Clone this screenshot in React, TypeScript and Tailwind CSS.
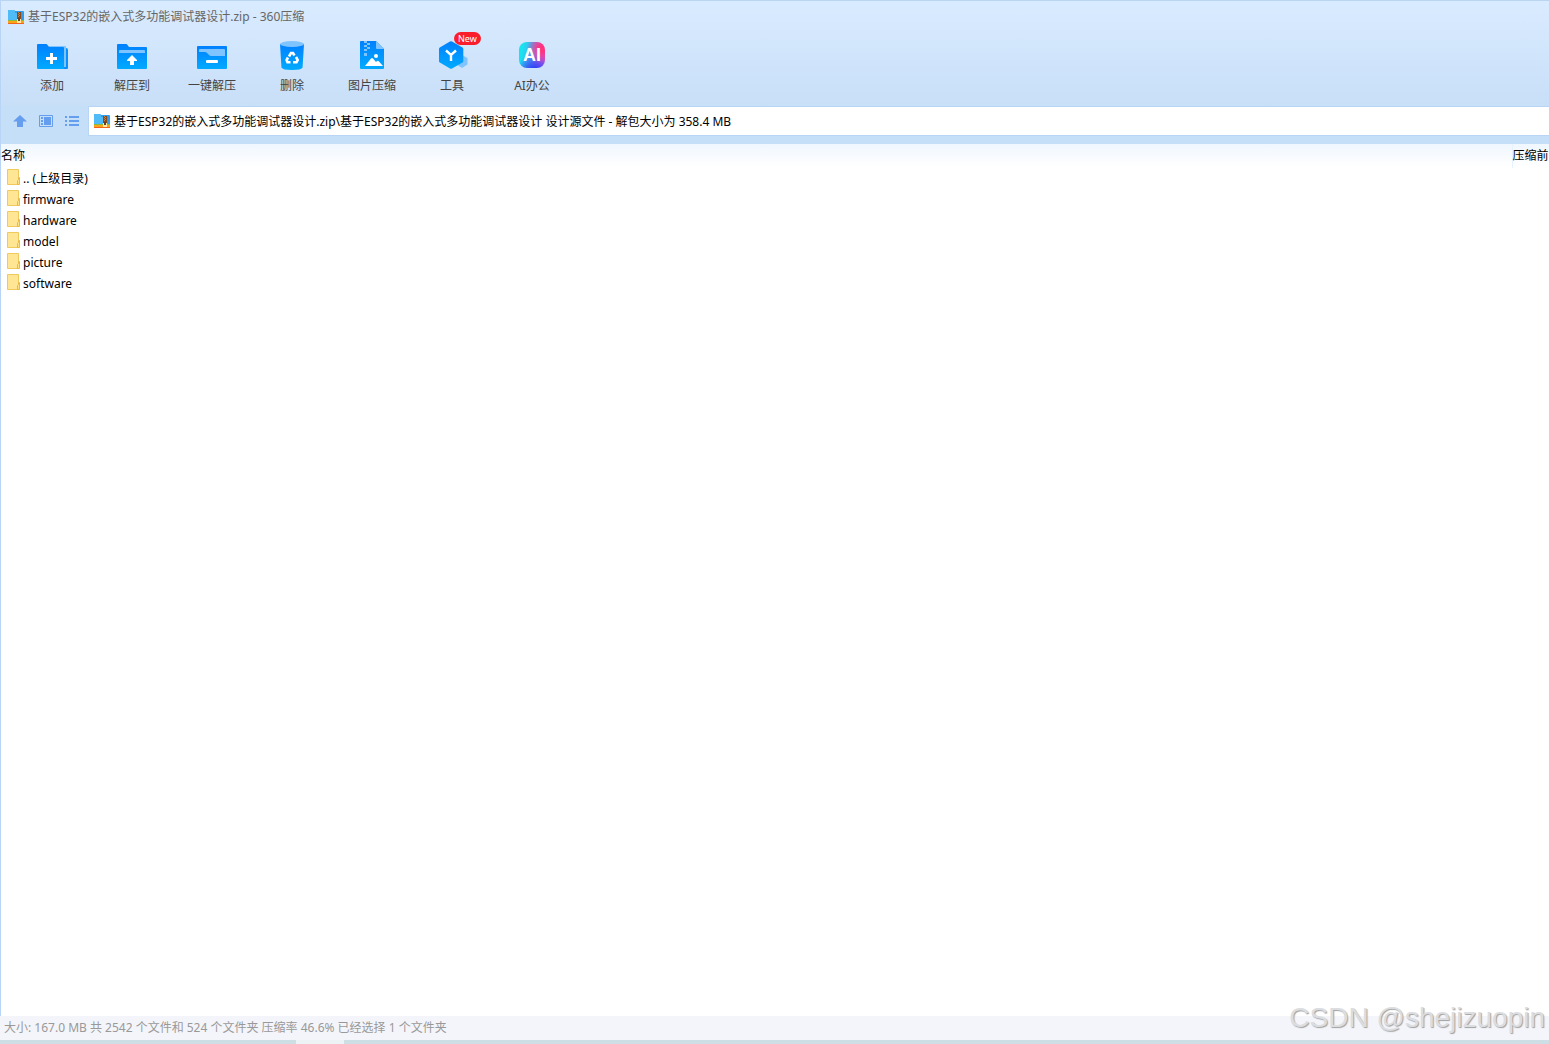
import { useState } from 'react';
import type { ReactNode } from 'react';

const ARCHIVE = '基于ESP32的嵌入式多功能调试器设计';

const folders = ['.. (上级目录)', 'firmware', 'hardware', 'model', 'picture', 'software'];

const BlueGradient = ({ id }: { id: string }) => (
    <defs>
        <linearGradient id={id} x1="0" y1="0" x2="0" y2="1">
            <stop offset="0" stopColor="#0080ff" />
            <stop offset="1" stopColor="#00aaff" />
        </linearGradient>
    </defs>
);

const AddIcon = () => (
    <svg viewBox="0 0 32 32" className="size-8">
        <BlueGradient id="add" />
        <path d="M14 8h16q2 0 2 2v18q0 1-1 1H14z" fill="#0a8fff" />
        <path d="M12 6h17q1 0 1 1v20h-2V8H13z" fill="#80c4ff" />
        <path d="M1 5q0-1 1-1h8q1 0 1.500 1l1.500 2h14q1 0 1 1v21H2q-1 0-1-1z" fill="url(#add)" />
        <path d="M14 13h3v4h4v3h-4v4h-3v-4h-4v-3h4z" fill="#fff" />
    </svg>
);

const ExtractIcon = () => (
    <svg viewBox="0 0 32 32" className="size-8">
        <BlueGradient id="extract" />
        <path d="M1 5q0-1 1-1h8q1 0 1.500 1l1.500 2h17q1 0 1 1v20q0 1-1 1H2q-1 0-1-1z" fill="url(#extract)" />
        <path d="M3 13v-2q0-1 1-1h24q1 0 1 1v2z" fill="#80c4ff" />
        <path d="M16 15l5 5v1h-3v4h-4v-4h-3v-1z" fill="#fff" />
    </svg>
);

const QuickExtractIcon = () => (
    <svg viewBox="0 0 32 32" className="size-8">
        <BlueGradient id="quick" />
        <rect x="1" y="6" width="30" height="23" rx="1" fill="url(#quick)" />
        <path d="M3 12v-2q0-1 1-1h24q1 0 1 1v6H15q-1 0-2-1l-2-2q-1-1-2-1z" fill="#80c4ff" />
        <rect x="10" y="20" width="12" height="3" rx="1" fill="#fff" />
    </svg>
);

const DeleteIcon = () => (
    <svg viewBox="0 0 32 32" className="size-8">
        <BlueGradient id="delete" />
        <path d="M4 4h24l-1.500 23.500Q25.500 30 16 30T5.500 27.500z" fill="url(#delete)" />
        <ellipse cx="16" cy="4" rx="12" ry="3" fill="#80c4ff" />
        <g fill="none" stroke="#fff" strokeWidth="2.600">
            <path d="M13 16.500l2-3.500h2l1.500 2.500" />
            <path d="M20 17l1.700 3-1.200 2.300H17" />
            <path d="M14.500 22.300h-3L10.600 20l1.400-2.500" />
        </g>
    </svg>
);

const ImageIcon = () => (
    <svg viewBox="0 0 32 32" className="size-8">
        <BlueGradient id="image" />
        <path d="M5 1h15l8 8v19q0 1-1 1H5q-1 0-1-1V2q0-1 1-1z" fill="url(#image)" />
        <path d="M20 1l8 8h-7q-1 0-1-1z" fill="#80c4ff" />
        <path d="M8 1h3v2H8zM11 3h3v2h-3zM8 5h3v2H8zM11 7h3v2h-3zM8 9h3v2H8zM8 13h3v3H8z" fill="#80c4ff" />
        <circle cx="20" cy="16" r="2" fill="#fff" />
        <path d="M9 26l6-7.500q1-1 2 0l3 3.500 1-1q1-.5 2 .5l4 4.500z" fill="#fff" />
    </svg>
);

const ToolsIcon = () => (
    <svg viewBox="0 0 32 32" className="size-8">
        <BlueGradient id="tools" />
        <path d="M26 15l5.500 3v6.500L26 28l-5.500-3.500V18z" fill="#80c4ff" />
        <path d="M14 1.500q1-.6 2 0l10.500 6q.8.500.8 1.500v12q0 1-.8 1.500l-10.500 6q-1 .6-2 0l-10.200-6q-.8-.5-.8-1.500V9q0-1 .8-1.500z" fill="url(#tools)" />
        <path d="M10 10.500l5 4.500 5-4.500M15 15v6" fill="none" stroke="#fff" strokeWidth="2.400" />
    </svg>
);

const AiIcon = () => (
    <span className="flex size-8 items-center justify-center">
        <span className="mb-0.5 flex size-[26px] items-center justify-center rounded-lg bg-[radial-gradient(circle_at_90%_25%,#ff3380_10%,transparent_50%),radial-gradient(circle_at_60%_115%,#2a40f5_10%,transparent_55%),linear-gradient(100deg,#18e4f0_15%,#50a8f0_45%,#c060e8_75%)] font-['Liberation_Sans',sans-serif] text-lg font-bold text-white">
            AI
        </span>
    </span>
);

const ArchiveIcon = () => (
    <svg viewBox="0 0 16 16" className="size-4 shrink-0">
        <path d="M0 2q0-1 1-1h5l1 1h8q1 0 1 1v9H0z" fill="#2f9cec" />
        <path d="M0 2q0-1 1-1h5l1 1v2h2v7H0z" fill="#4fbcf8" />
        <path d="M0 11h16v3H0z" fill="#f9a51a" />
        <path d="M0 11h16v1H0z" fill="#8cba3c" />
        <path d="M0 14h16v1H0z" fill="#f0641e" />
        <path d="M9 3h4v8H9z" fill="#8a4a20" />
        <path d="M10 3h1v1h-1zM11 4h1v1h-1zM10 5h1v1h-1zM11 6h1v1h-1zM10 7h1v1h-1z" fill="#c8843e" />
        <path d="M9 10h4v4H9z" fill="#ffe9a8" />
        <path d="M10 9h2v3h-2z" fill="#6b3e1f" />
    </svg>
);

const FolderIcon = () => (
    <svg viewBox="0 0 14 16" className="h-4 w-3.5 shrink-0">
        <path d="M.5.5h11v15H.5z" fill="#ffe694" stroke="#f0c95c" />
        <path d="M10.500 15.500v-4l1-1V8.500h1v7z" fill="#ffe083" stroke="#e8bb48" />
    </svg>
);

const UpIcon = () => (
    <svg viewBox="0 0 16 16" className="size-4">
        <path d="M8 2l7 6.500H11V14H5V8.500H1z" fill="#659eee" />
    </svg>
);

const PreviewIcon = () => (
    <svg viewBox="0 0 16 16" className="size-4">
        <path d="M1.500 2.500h13v11h-13z" fill="none" stroke="#659eee" />
        <path d="M3 4h2v2H3zM3 7h2v2H3zM3 10h2v2H3zM6 4h7v8H6z" fill="#659eee" />
    </svg>
);

const ListIcon = () => (
    <svg viewBox="0 0 16 16" className="size-4">
        <path d="M1 3h2v2H1zM5 3h10v2H5zM1 7h2v2H1zM5 7h10v2H5zM1 11h2v2H1zM5 11h10v2H5z" fill="#659eee" />
    </svg>
);

const tools: { label: string; icon: ReactNode; badge?: string }[] = [
    { label: '添加', icon: <AddIcon /> },
    { label: '解压到', icon: <ExtractIcon /> },
    { label: '一键解压', icon: <QuickExtractIcon /> },
    { label: '删除', icon: <DeleteIcon /> },
    { label: '图片压缩', icon: <ImageIcon /> },
    { label: '工具', icon: <ToolsIcon />, badge: 'New' },
    { label: 'AI办公', icon: <AiIcon /> },
];

const navButtons = [
    { label: '向上', icon: <UpIcon /> },
    { label: '预览', icon: <PreviewIcon /> },
    { label: '列表', icon: <ListIcon /> },
];

const App = () => {
    const [path, setPath] = useState(`${ARCHIVE}.zip\\${ARCHIVE} 设计源文件 - 解包大小为 358.4 MB`);

    return (
        <div className="flex h-screen flex-col overflow-hidden bg-white font-['Noto_Sans','Noto_Sans_CJK_SC',sans-serif] text-xs text-black">
            <div className="flex min-h-0 flex-1 flex-col border-l border-[#b9d5f5]">
                <header className="border-t border-[#b9d5f0] bg-linear-to-b from-[#d9ebff] to-[#c8dff8]">
                    <div className="flex h-[31px] items-center gap-1 pl-[7px] text-[#666]">
                        <ArchiveIcon />
                        <h1>{ARCHIVE}.zip - 360压缩</h1>
                    </div>

                    {/* Toolbar */}
                    <div className="flex h-[74px] pl-[11px]">
                        {tools.map((tool) => (
                            <button key={tool.label} type="button" className="relative flex w-20 flex-col items-center gap-1 pt-2 text-[#444]">
                                {tool.icon}
                                <span className="leading-5">{tool.label}</span>
                                {tool.badge && (
                                    <span className="absolute top-0 left-[42px] rounded-full bg-[#fa1e2d] px-1 text-[9px] leading-[13px] text-white">
                                        {tool.badge}
                                    </span>
                                )}
                            </button>
                        ))}
                    </div>
                </header>

                {/* Address bar */}
                <div className="flex bg-[#c5dff9] pb-2">
                    <div className="flex w-[87px] items-center gap-2.5 pl-[11px]">
                        {navButtons.map((item) => (
                            <button key={item.label} type="button" aria-label={item.label}>
                                {item.icon}
                            </button>
                        ))}
                    </div>
                    <label className="flex h-[30px] flex-1 items-center gap-1 border-y border-l border-[#b9d5f5] bg-white pl-[5px]">
                        <ArchiveIcon />
                        <input
                            type="text"
                            aria-label="路径"
                            value={path}
                            onChange={(e) => setPath(e.target.value)}
                            className="h-5 min-w-0 flex-1 outline-none"
                        />
                    </label>
                </div>

                {/* File list */}
                <main className="min-h-0 flex-1 overflow-hidden">
                    <table className="w-full text-left">
                        <thead className="bg-linear-to-b from-[#f0f7ff] to-white">
                            <tr className="h-6">
                                <th className="p-0 font-normal">名称</th>
                                <th className="w-[37px] border-l border-[#e6f2fd] p-0 font-normal whitespace-nowrap">压缩前</th>
                            </tr>
                        </thead>
                        <tbody>
                            {folders.map((name) => (
                                <tr key={name}>
                                    <td className="h-[21px] p-0 pl-1.5">
                                        <span className="flex items-start gap-0.5">
                                            <FolderIcon />
                                            <span className="leading-5">{name}</span>
                                        </span>
                                    </td>
                                    <td className="p-0"></td>
                                </tr>
                            ))}
                        </tbody>
                    </table>
                </main>
            </div>

            <footer className="relative">
                <p className="bg-[#f4f5fa] pl-1 leading-6 text-[#999]">
                    大小: 167.0 MB 共 2542 个文件和 524 个文件夹 压缩率 46.6% 已经选择 1 个文件夹
                </p>
                <div className="h-1 bg-[#cddfe5] pl-[296px]">
                    <div className="h-1 w-12 bg-[#edf3f4]"></div>
                </div>
                <span className="absolute right-1 bottom-1 font-['Liberation_Sans',sans-serif] text-[28px] leading-11 text-[#dcdde0] [text-shadow:1px_1px_1px_#a0a0a0]">
                    CSDN @shejizuopin
                </span>
            </footer>
        </div>
    );
};

export default App;
